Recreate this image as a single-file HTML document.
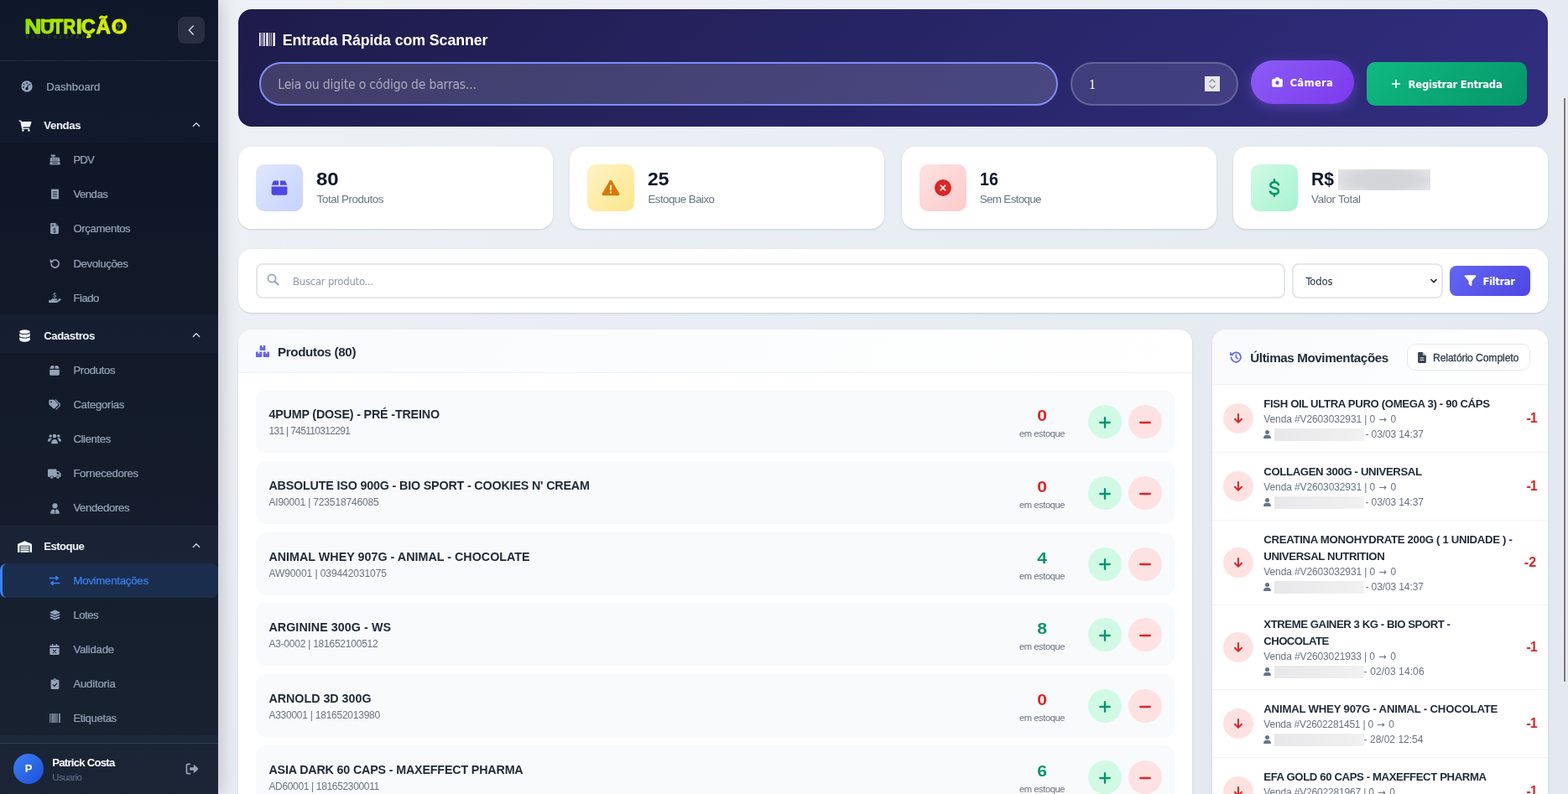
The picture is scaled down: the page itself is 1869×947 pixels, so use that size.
<!DOCTYPE html>
<html lang="pt-BR">
<head>
<meta charset="utf-8">
<title>Movimentações de Estoque</title>
<style>
*{box-sizing:border-box;margin:0;padding:0}
html,body{width:1869px;height:947px;overflow:hidden}
body{font-family:"Liberation Sans",sans-serif;color:#1e293b;background:linear-gradient(135deg,#eff3f7 0%,#e2e7f0 100%);position:relative;-webkit-font-smoothing:antialiased}
svg{display:block}
.abs{position:absolute}
.app{position:absolute;left:0;top:0;width:1869px;height:947px;overflow:hidden;will-change:transform}
/* ---------- sidebar ---------- */
.sidebar{position:absolute;left:0;top:0;width:260px;height:947px;background:linear-gradient(180deg,#0f172a 0%,#1e293b 100%);box-shadow:4px 0 20px rgba(0,0,0,.18);z-index:5;overflow:hidden}
.sb-head{position:absolute;left:0;top:0;width:260px;height:73px;border-bottom:1px solid rgba(255,255,255,.1)}
.sb-toggle{position:absolute;left:212px;top:20px;width:32px;height:32px;border-radius:8px;background:rgba(255,255,255,.1)}
.sb-toggle svg{position:absolute;left:10px;top:9px}
.nav-item{position:absolute;left:0;width:260px;height:41.12px;color:#94a3b8;font-size:13.2px;white-space:nowrap}
.nav-item .ic{position:absolute;top:0;height:41.12px;display:flex;align-items:center;justify-content:center}
.nav-item .tx{position:absolute;top:0;line-height:41.12px;-webkit-text-stroke:.22px currentColor}
.nav-group{position:absolute;left:0;width:260px;height:45px;color:#f1f5f9;font-weight:bold;font-size:13.4px}
.nav-group .tx{position:absolute;left:52px;top:0;line-height:45px}
.nav-group .ic{position:absolute;left:19.5px;top:0;width:20px;height:45px;display:flex;align-items:center;justify-content:center}
.nav-group .chev{position:absolute;left:229px;top:17.5px}
.submenu{position:absolute;left:0;width:260px;background:rgba(0,0,0,.15)}
.nav-active{position:absolute;left:0;width:260px;background:rgba(59,130,246,.15);border-left:3px solid #3b82f6;border-radius:8px}
.sb-foot{position:absolute;left:0;top:886px;width:260px;height:61px;border-top:1px solid rgba(255,255,255,.1);background:rgba(0,0,0,.08)}
.avatar{position:absolute;left:16px;top:12px;width:36px;height:36px;border-radius:50%;background:linear-gradient(135deg,#3b82f6,#1d4ed8);color:#fff;font-weight:bold;font-size:13px;line-height:36px;text-align:center}
.uname{position:absolute;left:62px;top:15px;color:#fff;font-weight:bold;font-size:13px;line-height:16px;white-space:nowrap}
.urole{position:absolute;left:62px;top:33px;color:#64748b;font-size:11px;line-height:14px}
/* ---------- scanner ---------- */
.scanner{position:absolute;left:284px;top:11px;width:1561px;height:140px;border-radius:16px;background:linear-gradient(135deg,#1e1b4b 0%,#312e81 100%)}
.scanner h2{position:absolute;left:53px;top:26px;font-size:17.5px;line-height:22px;font-weight:bold;color:#fff;white-space:nowrap}
.scan-in{position:absolute;left:25px;top:63px;width:952px;height:52px;border-radius:26px;border:2px solid #818cf8;background:rgba(255,255,255,.15);color:rgba(255,255,255,.55);font-family:"DejaVu Sans Condensed","DejaVu Sans","Liberation Sans",sans-serif;font-size:15px;line-height:50px;padding-left:20px;white-space:nowrap}
.qty-in{position:absolute;left:992px;top:63px;width:200px;height:52px;border-radius:26px;border:2px solid rgba(255,255,255,.2);background:rgba(255,255,255,.1);color:#fff;font-family:"Liberation Serif",serif;font-size:16px;line-height:50px;padding-left:20px}
.spin{position:absolute;left:158px;top:15px;width:18px;height:18px;background:#e6e6ea}
.btn-cam{position:absolute;left:1207px;top:61px;width:123px;height:52px;border-radius:26px;background:linear-gradient(135deg,#8b5cf6 0%,#7c3aed 100%);box-shadow:0 4px 15px rgba(139,92,246,.4);color:#fff;font-family:"DejaVu Sans Condensed","DejaVu Sans",sans-serif;font-weight:bold;font-size:12.5px;line-height:54px;white-space:nowrap}
.btn-reg{position:absolute;left:1345px;top:63px;width:191px;height:52px;border-radius:10px;background:linear-gradient(135deg,#10b981 0%,#059669 100%);color:#fff;font-family:"DejaVu Sans Condensed","DejaVu Sans",sans-serif;font-weight:bold;font-size:12.5px;line-height:54px;white-space:nowrap}
/* ---------- stats ---------- */
.stat{position:absolute;top:175px;width:375px;height:98px;background:#fff;border-radius:16px;box-shadow:0 1px 3px rgba(0,0,0,.1),0 1px 2px rgba(0,0,0,.06)}
.stat .sic{position:absolute;left:21px;top:21px;width:56px;height:56px;border-radius:10px;display:flex;align-items:center;justify-content:center}
.stat .num{position:absolute;left:93px;top:25px;font-size:22.5px;line-height:28px;font-weight:bold;color:#0f172a;white-space:nowrap}
.stat .lbl{position:absolute;left:93px;top:55px;font-size:13.4px;line-height:16px;color:#6b7280;white-space:nowrap}
/* ---------- filter ---------- */
.filter{position:absolute;left:284px;top:297px;width:1561px;height:76px;background:#fff;border-radius:16px;box-shadow:0 1px 3px rgba(0,0,0,.1),0 1px 2px rgba(0,0,0,.06)}
.f-in{position:absolute;left:21px;top:17px;width:1227px;height:42px;border:2px solid #e5e7eb;border-radius:8px;background:#fff;font-family:"DejaVu Sans Condensed","DejaVu Sans",sans-serif;font-size:12.4px;line-height:40px;color:#8e98a6;padding-left:42px;white-space:nowrap}
.f-sel{position:absolute;left:1256px;top:17px;width:180px;height:42px;border:2px solid #e5e7eb;border-radius:8px;background:#fff;font-family:"DejaVu Sans Condensed","DejaVu Sans",sans-serif;font-size:12.4px;line-height:40px;color:#1e293b;padding-left:14px}
.f-btn{position:absolute;left:1444px;top:20px;width:96px;height:36px;border-radius:8px;background:linear-gradient(135deg,#6366f1 0%,#4f46e5 100%);color:#fff;font-family:"DejaVu Sans Condensed","DejaVu Sans",sans-serif;font-weight:bold;font-size:12.5px;line-height:38px;white-space:nowrap}
/* ---------- cards ---------- */
.card{position:absolute;background:#fff;border-radius:16px;box-shadow:0 1px 3px rgba(0,0,0,.1),0 1px 2px rgba(0,0,0,.06);overflow:hidden}
.card-h{position:absolute;left:0;top:0;right:0;border-bottom:1px solid #f0f2f5;background:linear-gradient(135deg,#f8fafc 0%,#fff 100%)}
.card-h h3{position:absolute;font-size:15px;font-weight:bold;color:#1f2937;white-space:nowrap}
.prow{position:absolute;left:21px;width:1095px;height:75px;background:#f8fafc;border-radius:12px}
.prow .pn{position:absolute;left:15px;top:19px;font-size:14.3px;line-height:20px;font-weight:bold;color:#1f2937;white-space:nowrap}
.prow .pc{position:absolute;left:15px;top:41px;font-size:11.6px;line-height:16px;color:#6b7280;white-space:nowrap}
.prow .q{position:absolute;left:897px;top:18px;width:80px;text-align:center;font-size:18.8px;line-height:26px;font-weight:bold}
.prow .ql{position:absolute;left:897px;top:45px;width:80px;text-align:center;font-size:10.6px;line-height:14px;color:#6b7280;white-space:nowrap}
.red{color:#dc2626}.green{color:#059669}
.bplus,.bminus{position:absolute;top:18px;width:40px;height:40px;border-radius:50%}
.bplus{left:992px;background:#d1fae5}
.bminus{left:1040px;background:#fee2e2}
.mrow{position:absolute;left:0;width:400px;border-bottom:1px solid #f1f5f9}
.mrow .mi{position:absolute;left:12px;width:36px;height:36px;border-radius:50%;background:#fee2e2}
.mrow .mn{position:absolute;left:61px;font-size:13.3px;line-height:20px;font-weight:bold;color:#1f2937;white-space:nowrap}
.mrow .md{position:absolute;left:61px;font-size:11.6px;line-height:16px;color:#6b7280;white-space:nowrap}
.mrow .mq{position:absolute;white-space:nowrap;font-size:15.5px;line-height:20px;font-weight:bold;color:#dc2626}
.blur{background:linear-gradient(90deg,#e8e8ea,#f1f1f2);filter:blur(.6px)}
</style>
</head>
<body>
<div class="app">
<div class="sidebar">
<div class="sb-head">
<svg class="abs" style="left:28px;top:14px" width="130" height="36" viewBox="0 0 130 36"><defs><linearGradient id="lg" gradientUnits="userSpaceOnUse" x1="0" y1="0" x2="124" y2="0"><stop offset="0" stop-color="#8fe000"/><stop offset="1" stop-color="#e6f200"/></linearGradient></defs><text y="26.4" font-family="Liberation Sans,sans-serif" font-weight="bold" font-size="24.0" fill="url(#lg)" stroke="url(#lg)" stroke-width="1.0" stroke-linejoin="round"><tspan x="1.28" textLength="19.93" lengthAdjust="spacingAndGlyphs">N</tspan><tspan x="19.68" textLength="17.24" lengthAdjust="spacingAndGlyphs">U</tspan><tspan x="34.56" textLength="12.78" lengthAdjust="spacingAndGlyphs">T</tspan><tspan x="47.62" textLength="14.67" lengthAdjust="spacingAndGlyphs">R</tspan><tspan x="62.78" textLength="7.05" lengthAdjust="spacingAndGlyphs">I</tspan><tspan x="68.81" textLength="17.03" lengthAdjust="spacingAndGlyphs">Ç</tspan><tspan x="86.50" textLength="17.40" lengthAdjust="spacingAndGlyphs">Ã</tspan><tspan x="104.67" textLength="18.66" lengthAdjust="spacingAndGlyphs">O</tspan></text><rect x="21.5" y="9.2" width="24" height="3.4" fill="#a8e700"/><path d="M118.0 7.4 L110.2 17.2 L113.8 17.8 L107.8 28.0 L116.6 16.2 L113.0 15.6Z" fill="#506e0a"/><text x="2.8" y="32.2" font-family="Liberation Sans,sans-serif" font-weight="bold" font-size="4.6" textLength="70" lengthAdjust="spacing" fill="#2f4c0e">SUPLEMENTOS</text></svg>
<div class="sb-toggle"><svg width="12" height="14" viewBox="0 0 12 14"><path d="M8.2 2L3.400 7l4.800 5" fill="none" stroke="#cbd5e1" stroke-width="1.600" stroke-linecap="round" stroke-linejoin="round"/></svg></div>
</div>
<div class="nav-item" style="top:82.94px"><span class="ic" style="left:23px;width:18px"><svg width="14" height="14" viewBox="0 0 16 16" ><circle cx="8" cy="8" r="7.6" fill="currentColor"/><circle cx="8" cy="3.6" r="1" fill="#0f172a"/><circle cx="4.2" cy="5.2" r="1" fill="#0f172a"/><circle cx="11.8" cy="5.2" r="1" fill="#0f172a"/><circle cx="3.4" cy="9" r="1" fill="#0f172a"/><circle cx="8" cy="11" r="2" fill="#0f172a"/><path d="M7.3 11 L9.6 5.4 L10.6 5.8 L8.8 11.4Z" fill="#0f172a"/></svg></span><span class="tx" style="left:55px"><span style="font-size:13.2px;letter-spacing:-0.035px;position:relative;left:0.20px;">Dashboard</span></span></div>
<div class="nav-group" style="top:127.19999999999999px"><span class="ic"><svg width="16" height="14" viewBox="0 0 18 16" ><path d="M0.5 0.6h2.4c.5 0 .9.3 1 .8l.2.9h12.6c.6 0 1 .6.8 1.100l-1.600 5.200c-.2.600-.7 1-1.300 1H6l.3 1.400h8.500v1.500H5.400c-.4 0-.8-.3-.9-.7L2.400 2.100H.5z" fill="currentColor"/><circle cx="6" cy="14.300" r="1.500" fill="currentColor"/><circle cx="14" cy="14.300" r="1.500" fill="currentColor"/></svg></span><span class="tx"><span style="font-size:13.2px;letter-spacing:-0.349px;position:relative;left:0.20px;">Vendas</span></span><span class="chev"><svg width="10" height="7" viewBox="0 0 10 7" ><path d="M1.300 5.500L5 1.800l3.700 3.700" fill="none" stroke="#cbd5e1" stroke-width="1.400" stroke-linecap="round" stroke-linejoin="round"/></svg></span></div>
<div class="submenu" style="top:169.8px;height:205.60px"></div>
<div class="nav-item" style="top:170.15px;color:#94a3b8"><span class="ic" style="left:56px;width:18px"><svg width="13" height="13" viewBox="0 0 16 16" ><rect x="2" y="0.5" width="6.500" height="2.500" rx=".6" fill="currentColor"/><rect x="4.300" y="3" width="2" height="1.500" fill="currentColor"/><path d="M2.600 4.500h10.800c.5 0 .9.300 1 .8l1.100 5.200H.5l1.100-5.200c.1-.5.500-.8 1-.8z" fill="currentColor"/><rect x="0.5" y="11.300" width="15" height="4.200" rx="1" fill="currentColor"/><g fill="#0f172a"><rect x="3.500" y="6" width="1.300" height="1.100"/><rect x="6" y="6" width="1.300" height="1.100"/><rect x="8.600" y="6" width="1.300" height="1.100"/><rect x="11.200" y="6" width="1.300" height="1.100"/><rect x="4.500" y="8.200" width="1.300" height="1.100"/><rect x="7.300" y="8.200" width="1.300" height="1.100"/><rect x="10.100" y="8.200" width="1.300" height="1.100"/><rect x="4" y="12.900" width="8" height="1"/></g></svg></span><span class="tx" style="left:87px"><span style="font-size:13.2px;letter-spacing:-0.900px;position:relative;left:0.40px;">PDV</span></span></div>
<div class="nav-item" style="top:211.27px;color:#94a3b8"><span class="ic" style="left:56px;width:18px"><svg width="11" height="13" viewBox="0 0 12 16" ><path d="M0.5 0.300l1.400 1 1.300-1 1.400 1 1.400-1 1.400 1 1.400-1 1.300 1 1.400-1v15.400l-1.400-1-1.300 1-1.400-1-1.400 1-1.400-1-1.400 1-1.300-1-1.400 1z" fill="currentColor"/><g fill="#0f172a"><rect x="2.800" y="4.300" width="6.400" height="1.100"/><rect x="2.800" y="7.400" width="6.400" height="1.100"/><rect x="2.800" y="10.500" width="6.400" height="1.100"/></g></svg></span><span class="tx" style="left:87px"><span style="font-size:13.2px;letter-spacing:-0.521px;position:relative;left:0.40px;">Vendas</span></span></div>
<div class="nav-item" style="top:252.39px;color:#94a3b8"><span class="ic" style="left:56px;width:18px"><svg width="10" height="13" viewBox="0 0 12 16" ><path d="M1.500 0h6l4.500 4.500V14.500c0 .8-.7 1.500-1.500 1.500h-9C.7 16 0 15.300 0 14.500v-13C0 .7.700 0 1.500 0z" fill="currentColor"/><path d="M7.500 0v3.500c0 .6.400 1 1 1H12z" fill="#0f172a" opacity=".45"/><g fill="#0f172a"><rect x="2" y="2" width="3" height="1"/><rect x="2" y="4" width="3" height="1"/></g><path d="M7.600 9.300C7.300 8.600 6.700 8.300 6 8.300c-1 0-1.700.5-1.700 1.300 0 1.800 3.400.7 3.400 2.600 0 .8-.7 1.300-1.700 1.300-.8 0-1.400-.3-1.700-1M6 7.300v1M6 13.500v1" fill="none" stroke="#0f172a" stroke-width="1" stroke-linecap="round"/></svg></span><span class="tx" style="left:87px"><span style="font-size:13.2px;letter-spacing:-0.392px;position:relative;left:0.40px;">Orçamentos</span></span></div>
<div class="nav-item" style="top:293.51px;color:#94a3b8"><span class="ic" style="left:56px;width:18px"><svg width="13" height="13" viewBox="0 0 16 16" ><path d="M2.600 8a5.600 5.600 0 1 0 1.900-4.200" fill="none" stroke="currentColor" stroke-width="2" stroke-linecap="round"/><path d="M0.800 1.200v5.300h5.300z" fill="currentColor"/></svg></span><span class="tx" style="left:87px"><span style="font-size:13.2px;letter-spacing:-0.379px;position:relative;left:0.40px;">Devoluções</span></span></div>
<div class="nav-item" style="top:334.63px;color:#94a3b8"><span class="ic" style="left:56px;width:18px"><svg width="15" height="13" viewBox="0 0 18 16" ><path d="M10.200 2.300C9.900 1.600 9.300 1.300 8.500 1.300c-1.100 0-1.800.5-1.800 1.300 0 1.800 3.600.7 3.600 2.600 0 .8-.7 1.300-1.800 1.300-.9 0-1.500-.3-1.800-1M8.500 .2v1.100M8.500 6.500v1.100" fill="none" stroke="currentColor" stroke-width="1.100" stroke-linecap="round"/><path d="M0 11h2.500l2.200-1.700c.4-.3.900-.5 1.400-.5h5.200c.6 0 1.100.5 1.100 1.100s-.5 1.100-1.100 1.100H8.500v.6h3.700l3.600-2.600c.5-.4 1.300-.3 1.700.3.400.5.300 1.300-.3 1.700l-4.300 3.100c-.5.400-1.100.6-1.700.6H0z" fill="currentColor"/></svg></span><span class="tx" style="left:87px"><span style="font-size:13.2px;letter-spacing:-0.488px;position:relative;left:0.40px;">Fiado</span></span></div>
<div class="nav-group" style="top:378.3px"><span class="ic"><svg width="13" height="15" viewBox="0 0 14 16" ><ellipse cx="7" cy="2.800" rx="6.800" ry="2.700" fill="currentColor"/><path d="M0.200 4.700c1.300 1.100 4 1.700 6.800 1.700s5.500-.6 6.800-1.700v3c0 1.400-3 2.600-6.800 2.600S.2 9.100.2 7.700z" fill="currentColor"/><path d="M0.200 9.600c1.300 1.100 4 1.700 6.800 1.700s5.500-.6 6.800-1.700v3.300C13.800 14.500 10.800 15.800 7 15.800S.2 14.500.2 12.900z" fill="currentColor"/></svg></span><span class="tx"><span style="font-size:13.2px;letter-spacing:-0.420px;position:relative;left:0.20px;">Cadastros</span></span><span class="chev"><svg width="10" height="7" viewBox="0 0 10 7" ><path d="M1.300 5.500L5 1.800l3.700 3.700" fill="none" stroke="#cbd5e1" stroke-width="1.400" stroke-linecap="round" stroke-linejoin="round"/></svg></span></div>
<div class="submenu" style="top:421.0px;height:205.60px"></div>
<div class="nav-item" style="top:421.0px;color:#94a3b8"><span class="ic" style="left:56px;width:18px"><svg width="12" height="12" viewBox="0 0 14 14" ><path d="M1.700 1.100c.2-.5.700-.8 1.200-.8H6.300v4.200H.3z" fill="currentColor"/><path d="M7.700.3h3.400c.5 0 1 .3 1.200.8l1.400 3.400H7.700z" fill="currentColor"/><path d="M0.200 5.900h13.600v6c0 1-.8 1.800-1.800 1.800H2c-1 0-1.800-.8-1.800-1.800z" fill="currentColor"/></svg></span><span class="tx" style="left:87px"><span style="font-size:13.2px;letter-spacing:-0.355px;position:relative;left:0.40px;">Produtos</span></span></div>
<div class="nav-item" style="top:462.12px;color:#94a3b8"><span class="ic" style="left:56px;width:18px"><svg width="14" height="13" viewBox="0 0 18 16" ><path d="M0.500 1.800C.5 1.100 1.100.5 1.800.5h5.400c.5 0 .9.200 1.200.5l5.700 5.700c.7.700.7 1.800 0 2.500l-4.700 4.700c-.7.700-1.800.7-2.500 0L1 8.200C.7 7.900.5 7.400.5 7z" fill="currentColor"/><circle cx="4" cy="4" r="1.200" fill="#0f172a"/><path d="M10.500.8l5.900 5.900c1 1 1 2.600 0 3.600l-4.900 4.900" fill="none" stroke="currentColor" stroke-width="1.500" stroke-linecap="round"/></svg></span><span class="tx" style="left:87px"><span style="font-size:13.2px;letter-spacing:-0.309px;position:relative;left:0.40px;">Categorias</span></span></div>
<div class="nav-item" style="top:503.24px;color:#94a3b8"><span class="ic" style="left:56px;width:18px"><svg width="16" height="13" viewBox="0 0 20 16" ><circle cx="10" cy="3.700" r="2.900" fill="currentColor"/><circle cx="4" cy="3.600" r="2.200" fill="currentColor"/><circle cx="16" cy="3.600" r="2.200" fill="currentColor"/><path d="M5.200 14.300c0-3 2-5.600 4.800-5.600s4.800 2.600 4.800 5.600c0 .5-.4.900-.9.900H6.100c-.5 0-.9-.4-.9-.9z" fill="currentColor"/><path d="M0 11.200c0-2.400 1.500-4.300 3.700-4.300.8 0 1.500.2 2.100.6-1.300 1-2.100 2.400-2.300 4.100H.4c-.2 0-.4-.2-.4-.4z" fill="currentColor"/><path d="M20 11.200c0-2.400-1.500-4.300-3.700-4.300-.8 0-1.500.2-2.100.6 1.300 1 2.100 2.400 2.300 4.100h3.100c.2 0 .4-.2.400-.4z" fill="currentColor"/></svg></span><span class="tx" style="left:87px"><span style="font-size:13.2px;letter-spacing:-0.379px;position:relative;left:0.40px;">Clientes</span></span></div>
<div class="nav-item" style="top:544.36px;color:#94a3b8"><span class="ic" style="left:56px;width:18px"><svg width="16" height="14" viewBox="0 0 20 16" ><path d="M1.500 1h10c.8 0 1.500.7 1.500 1.500V4h2.400c.5 0 1 .2 1.300.6l2.400 2.700c.3.300.4.700.4 1.200V12c0 .6-.4 1-1 1h-.6a3 3 0 0 0-5.800 0H8.900a3 3 0 0 0-5.800 0H1.500C.7 13 0 12.300 0 11.500v-9C0 1.700.7 1 1.500 1z" fill="currentColor"/><path d="M13.500 5.500v3h4.300l-2.300-2.700c-.1-.2-.3-.3-.5-.3z" fill="#0f172a"/><circle cx="6" cy="13.300" r="2" fill="currentColor"/><circle cx="15" cy="13.300" r="2" fill="currentColor"/></svg></span><span class="tx" style="left:87px"><span style="font-size:13.2px;letter-spacing:-0.334px;position:relative;left:0.40px;">Fornecedores</span></span></div>
<div class="nav-item" style="top:585.48px;color:#94a3b8"><span class="ic" style="left:56px;width:18px"><svg width="11" height="13" viewBox="0 0 14 16" ><circle cx="7" cy="4" r="3.900" fill="currentColor"/><path d="M0.200 15c0-3.200 2-5.800 4.700-6.200L7 11.500 9.100 8.800c2.700.4 4.700 3 4.700 6.200 0 .5-.4.900-.9.900H1.100c-.5 0-.9-.4-.9-.9z" fill="currentColor"/><path d="M6.300 9.500h1.400l.3 1-.500 1 .8 3.300L7 15.800l-1.300-1 .8-3.300-.5-1z" fill="#0f172a" opacity=".55"/></svg></span><span class="tx" style="left:87px"><span style="font-size:13.2px;letter-spacing:-0.344px;position:relative;left:0.40px;">Vendedores</span></span></div>
<div class="nav-group" style="top:629.2px"><span class="ic"><svg width="17" height="14" viewBox="0 0 20 16" ><path d="M0 15.500V5.200c0-.6.400-1.200.9-1.400L9.300.3c.4-.2.900-.2 1.400 0l8.400 3.500c.5.200.9.800.9 1.400v10.300c0 .3-.2.500-.5.500h-1.900c-.3 0-.5-.2-.5-.5V7.300c0-.5-.4-.9-.9-.9H3.800c-.5 0-.9.400-.9.900v8.200c0 .3-.2.500-.5.500H.5c-.3 0-.5-.2-.5-.5z" fill="currentColor"/><rect x="4" y="7.600" width="12" height="2" fill="currentColor"/><rect x="4" y="10.500" width="12" height="2" fill="currentColor"/><rect x="4" y="13.400" width="12" height="2.600" fill="currentColor"/></svg></span><span class="tx"><span style="font-size:13.2px;letter-spacing:-0.581px;position:relative;left:0.20px;">Estoque</span></span><span class="chev"><svg width="10" height="7" viewBox="0 0 10 7" ><path d="M1.300 5.500L5 1.800l3.700 3.700" fill="none" stroke="#cbd5e1" stroke-width="1.400" stroke-linecap="round" stroke-linejoin="round"/></svg></span></div>
<div class="submenu" style="top:671.8px;height:205.60px"></div>
<div class="nav-active" style="top:671.8px;height:41.12px"></div>
<div class="nav-item" style="top:671.8px;color:#3b82f6"><span class="ic" style="left:56px;width:18px"><svg width="14" height="13" viewBox="0 0 16 16" ><path d="M1 4.300h11" stroke="currentColor" stroke-width="1.800" fill="none" stroke-linecap="round"/><path d="M10.200 1.200l3.800 3.100-3.800 3.100z" fill="currentColor" stroke="currentColor" stroke-width="1" stroke-linejoin="round"/><path d="M15 11.700H4" stroke="currentColor" stroke-width="1.800" fill="none" stroke-linecap="round"/><path d="M5.800 8.600L2 11.700l3.800 3.100z" fill="currentColor" stroke="currentColor" stroke-width="1" stroke-linejoin="round"/></svg></span><span class="tx" style="left:87px"><span style="font-size:13.2px;letter-spacing:-0.230px;position:relative;left:0.40px;">Movimentações</span></span></div>
<div class="nav-item" style="top:712.92px;color:#94a3b8"><span class="ic" style="left:56px;width:18px"><svg width="13" height="13" viewBox="0 0 16 16" ><path d="M8 .5l7.200 3.200c.4.200.4.800 0 1L8 7.900.8 4.700c-.4-.2-.4-.8 0-1z" fill="currentColor"/><path d="M.8 7.400l1.700-.7L8 9.200l5.500-2.500 1.700.7c.4.200.4.800 0 1L8 11.600.8 8.400c-.4-.2-.4-.8 0-1z" fill="currentColor"/><path d="M.8 11.200l1.700-.7L8 13l5.500-2.500 1.700.7c.4.200.4.800 0 1L8 15.400.8 12.200c-.4-.2-.4-.8 0-1z" fill="currentColor"/></svg></span><span class="tx" style="left:87px"><span style="font-size:13.2px;letter-spacing:-0.492px;position:relative;left:0.40px;">Lotes</span></span></div>
<div class="nav-item" style="top:754.04px;color:#94a3b8"><span class="ic" style="left:56px;width:18px"><svg width="12" height="13" viewBox="0 0 14 16" ><rect x="3" y="0" width="2" height="3.500" rx="1" fill="currentColor"/><rect x="9" y="0" width="2" height="3.500" rx="1" fill="currentColor"/><path d="M0 3.500C0 2.700.7 2 1.500 2h11c.8 0 1.500.7 1.500 1.500V5H0z" fill="currentColor"/><path d="M0 6h14v8.500c0 .8-.7 1.500-1.500 1.500h-11C.7 16 0 15.300 0 14.500z" fill="currentColor"/><path d="M5 9l4 4M9 9l-4 4" stroke="#0f172a" stroke-width="1.400" stroke-linecap="round"/></svg></span><span class="tx" style="left:87px"><span style="font-size:13.2px;letter-spacing:-0.230px;position:relative;left:0.40px;">Validade</span></span></div>
<div class="nav-item" style="top:795.16px;color:#94a3b8"><span class="ic" style="left:56px;width:18px"><svg width="11" height="13" viewBox="0 0 12 16" ><path d="M1.500 2h2.100a2.500 2.500 0 0 1 4.800 0h2.100c.8 0 1.500.7 1.500 1.500v11c0 .8-.7 1.500-1.500 1.500h-9C.7 16 0 15.300 0 14.500v-11C0 2.700.7 2 1.500 2z" fill="currentColor"/><circle cx="6" cy="2.600" r=".9" fill="#0f172a"/><path d="M3.300 9.600l1.900 1.900 3.600-3.900" fill="none" stroke="#0f172a" stroke-width="1.400" stroke-linecap="round" stroke-linejoin="round"/></svg></span><span class="tx" style="left:87px"><span style="font-size:13.2px;letter-spacing:-0.214px;position:relative;left:0.40px;">Auditoria</span></span></div>
<div class="nav-item" style="top:836.28px;color:#94a3b8"><span class="ic" style="left:56px;width:18px"><svg width="13" height="11" viewBox="0 0 16 14" ><g fill="currentColor"><rect x="0" y="0" width="1.300" height="14"/><rect x="2.200" y="0" width=".8" height="14"/><rect x="4" y="0" width="2" height="14"/><rect x="7" y="0" width="2" height="14"/><rect x="10" y="0" width=".8" height="14"/><rect x="11.700" y="0" width=".8" height="14"/><rect x="14" y="0" width="2" height="14"/></g></svg></span><span class="tx" style="left:87px"><span style="font-size:13.2px;letter-spacing:-0.399px;position:relative;left:0.40px;">Etiquetas</span></span></div>
<div class="sb-foot"><div class="avatar">P</div><div class="uname"><span style="font-size:13.2px;letter-spacing:-0.780px;position:relative;left:0.30px;">Patrick Costa</span></div><div class="urole"><span style="font-size:11.4px;letter-spacing:-0.602px;position:relative;left:0.30px;">Usuario</span></div><span class="abs" style="left:221px;top:23px;color:#94a3b8"><svg width="16" height="14" viewBox="0 0 18 16" ><path d="M6 1.500H3.500C2.400 1.500 1.500 2.400 1.500 3.500v9c0 1.100.9 2 2 2H6" fill="none" stroke="currentColor" stroke-width="2" stroke-linecap="round"/><path d="M6.500 6h4.500V3.200c0-.6.700-.9 1.100-.5l5.100 4.800c.3.300.3.700 0 1l-5.100 4.800c-.4.400-1.100.1-1.100-.5V10H6.500c-.5 0-.8-.4-.8-.8V6.800c0-.4.400-.8.800-.8z" fill="currentColor"/></svg></span></div>
</div>
<div class="scanner">
<svg class="abs" style="left:25px;top:28px" width="19" height="16" viewBox="0 0 19 16"><g fill="#fff"><rect x="0" y="0" width="1.5" height="16"/><rect x="2.5" y="0" width="1" height="16" opacity=".75"/><rect x="4.6" y="0" width="2.3" height="16" opacity=".8"/><rect x="8.3" y="0" width="2.3" height="16"/><rect x="11.8" y="0" width="1" height="16" opacity=".75"/><rect x="13.8" y="0" width="1" height="16" opacity=".75"/><rect x="16.5" y="0" width="2.3" height="16"/></g></svg><h2><span style="font-size:17.8px;letter-spacing:-0.097px;position:relative;left:-0.20px;">Entrada Rápida com Scanner</span></h2>
<div class="scan-in"><span style="font-size:15.6px;letter-spacing:-0.191px;position:relative;left:0.30px;">Leia ou digite o código de barras...</span></div>
<div class="qty-in">1<div class="spin"><svg width="18" height="18" viewBox="0 0 18 18"><path d="M5.5 7.2L9 3.8l3.5 3.400M5.5 10.800L9 14.200l3.500-3.400" fill="none" stroke="#8a8a92" stroke-width="1.300"/></svg></div></div>
<div class="btn-cam"><svg class="abs" style="left:25px;top:20px" width="13" height="12" viewBox="0 0 14 12" preserveAspectRatio="none"><path d="M4.300 1.200C4.500.6 5 .2 5.600.2h2.800c.6 0 1.100.4 1.300 1l.3.800h2c1 0 1.800.8 1.800 1.800v6.200c0 1-.8 1.800-1.800 1.800H2c-1 0-1.800-.8-1.800-1.800V3.800C.2 2.800 1 2 2 2h2z" fill="#fff"/><circle cx="7" cy="6.700" r="2.400" fill="#8450f0"/></svg><span class="abs" style="left:46px;top:0"><span style="font-size:13px;letter-spacing:0.247px;position:relative;left:0.50px;">Câmera</span></span></div>
<div class="btn-reg"><svg class="abs" style="left:29px;top:20px" width="12" height="12" viewBox="0 0 12 12"><path d="M6 1v10M1 6h10" stroke="#fff" stroke-width="1.600" fill="none"/></svg><span class="abs" style="left:49px;top:0"><span style="font-size:13px;letter-spacing:-0.314px;position:relative;left:0.60px;">Registrar Entrada</span></span></div>
</div>
<div class="stat" style="left:284px"><div class="sic" style="background:linear-gradient(135deg,#e0e7ff,#c7d2fe)"><svg width="20" height="18" viewBox="0 0 14 13"><path d="M1.700 1.100c.2-.5.700-.8 1.200-.8H6.300v3.900H.3z" fill="#4f46e5"/><path d="M7.700.3h3.400c.5 0 1 .3 1.200.8l1.400 3.100H7.700z" fill="#4f46e5"/><path d="M0.200 5.500h13.600v5.500c0 1-.8 1.800-1.800 1.800H2c-1 0-1.800-.8-1.800-1.800z" fill="#4f46e5"/></svg></div><div class="num"><span style="font-size:21.8px;display:inline-block;transform:scaleX(1.103);transform-origin:0 50%">80</span></div><div class="lbl"><span style="font-size:13.4px;letter-spacing:-0.446px;position:relative;left:0.70px;">Total Produtos</span></div></div>
<div class="stat" style="left:679px"><div class="sic" style="background:linear-gradient(135deg,#fef3c7,#fde68a)"><svg width="22" height="20" viewBox="0 0 22 20"><path d="M11 .8c.6 0 1.200.3 1.500.9l8.700 15c.6 1.100-.1 2.500-1.500 2.500H2.300c-1.300 0-2.100-1.400-1.500-2.500l8.700-15c.3-.6.900-.9 1.500-.9z" fill="#d97706"/><rect x="10" y="6.500" width="2" height="6.500" rx="1" fill="#fef0c0"/><circle cx="11" cy="15.500" r="1.200" fill="#fef0c0"/></svg></div><div class="num"><span style="font-size:21.8px;display:inline-block;transform:scaleX(1.049);transform-origin:0 50%">25</span></div><div class="lbl"><span style="font-size:13.4px;letter-spacing:-0.559px;position:relative;left:0.40px;">Estoque Baixo</span></div></div>
<div class="stat" style="left:1075px"><div class="sic" style="background:linear-gradient(135deg,#fee2e2,#fecaca)"><svg width="20" height="20" viewBox="0 0 20 20"><circle cx="10" cy="10" r="10" fill="#dc2626"/><path d="M7.200 7.200l5.600 5.600M12.800 7.200l-5.600 5.600" stroke="#fee2e2" stroke-width="1.800" stroke-linecap="round"/></svg></div><div class="num"><span style="font-size:21.8px;display:inline-block;transform:scaleX(0.900);transform-origin:0 50%">16</span></div><div class="lbl"><span style="font-size:13.4px;letter-spacing:-0.674px;position:relative;left:-0.20px;">Sem Estoque</span></div></div>
<div class="stat" style="left:1470px"><div class="sic" style="background:linear-gradient(135deg,#d1fae5,#a7f3d0)"><svg width="14" height="22" viewBox="0 0 14 22"><path d="M7 1.300v2.800M7 17.900v2.800M12 7.300C11.300 5.300 9.500 4.200 7.100 4.200 4.300 4.200 2.300 5.600 2.300 7.700c0 2.300 2 3 4.700 3.500s4.800 1.300 4.800 3.700c0 2.100-2 3.500-4.700 3.500-2.500 0-4.400-1-5.100-2.900" fill="none" stroke="#059669" stroke-width="2.500" stroke-linecap="round"/></svg></div><div class="num"><span style="font-size:21.8px;display:inline-block;transform:scaleX(0.970);transform-origin:0 50%">R$</span><span class="abs" style="left:32px;top:2px;width:110px;height:25px;background:radial-gradient(ellipse 60% 75% at 50% 50%,#d3d4d8 0%,#d5d6da 55%,#e4e4e7 100%)"></span></div><div class="lbl"><span style="font-size:13.4px;letter-spacing:-0.299px;position:relative;left:0.00px;">Valor Total</span></div></div>
<div class="filter">
<div class="f-in"><svg class="abs" style="left:11px;top:10px" width="15" height="15" viewBox="0 0 15 15"><circle cx="6" cy="6" r="4.600" fill="none" stroke="#94a3b8" stroke-width="1.700"/><path d="M9.500 9.500l4 4" stroke="#94a3b8" stroke-width="1.800" stroke-linecap="round"/></svg><span style="font-size:13px;letter-spacing:-0.251px;position:relative;left:0.00px;">Buscar produto...</span></div>
<div class="f-sel"><span style="font-size:13px;letter-spacing:-0.142px;position:relative;left:0.50px;">Todos</span><svg class="abs" style="left:162px;top:15px" width="10" height="8" viewBox="0 0 10 8"><path d="M1.500 2l3.500 3.500L8.500 2" fill="none" stroke="#222" stroke-width="1.600"/></svg></div>
<div class="f-btn"><svg class="abs" style="left:17px;top:11px" width="15" height="14" viewBox="0 0 15 14"><path d="M0.600 1.200C.6.700 1 .3 1.500.3h12c.8 0 1.200.9.700 1.500L9.400 7.300v4.900c0 .7-.8 1.100-1.300.7L6 11.300c-.3-.2-.4-.5-.4-.8V7.300L.9 1.800C.7 1.600.6 1.400.6 1.200z" fill="#fff"/></svg><span class="abs" style="left:39px;top:0"><span style="font-size:13px;letter-spacing:-0.392px;position:relative;left:0.40px;">Filtrar</span></span></div>
</div>
<div class="card" style="left:284px;top:393px;width:1137px;height:600px">
<div class="card-h" style="height:52px"><svg class="abs" style="left:21px;top:19px" width="16" height="14" viewBox="0 0 16 14"><g fill="#6366f1"><path d="M5.300 0h1.900v2.200h1.600V0h1.900c.4 0 .7.300.7.700v4.600c0 .4-.3.700-.7.700H5.300c-.4 0-.7-.3-.7-.7V.7c0-.4.300-.7.700-.7z"/><path d="M.7 7.500h1.900v2.200h1.600V7.500h2.400c.4 0 .7.300.7.700v5.100c0 .4-.3.700-.7.700H.7c-.4 0-.7-.3-.7-.7V8.200c0-.4.300-.7.700-.7z"/><path d="M9.400 7.500h2.400v2.200h1.600V7.500h1.900c.4 0 .7.300.7.700v5.100c0 .4-.3.700-.7.700H9.400c-.4 0-.7-.3-.7-.7V8.200c0-.4.300-.7.700-.7z"/></g></svg><h3 style="left:47px;top:17px;line-height:20px"><span style="font-size:15.2px;letter-spacing:-0.369px;position:relative;left:0.00px;">Produtos (80)</span></h3></div>
<div class="prow" style="top:72.0px"><div class="pn"><span style="font-size:14.3px;letter-spacing:-0.168px;position:relative;left:0.40px;">4PUMP (DOSE) - PRÉ -TREINO</span></div><div class="pc"><span style="font-size:12px;letter-spacing:-0.672px;position:relative;left:0.40px;">131 | 745110312291</span></div><div class="q red"><span style="display:inline-block;transform:scaleX(1.13)">0</span></div><div class="ql"><span style="font-size:11.2px;letter-spacing:-0.460px;">em estoque</span></div><div class="bplus"><svg class="abs" style="left:13px;top:13.8px" width="14" height="14" viewBox="0 0 14 14"><path d="M7 1.2v11.600M1.200 7h11.600" stroke="#059669" stroke-width="2.300" stroke-linecap="round" fill="none"/></svg></div><div class="bminus"><svg class="abs" style="left:13px;top:13.8px" width="14" height="14" viewBox="0 0 14 14"><path d="M1.200 7h11.600" stroke="#dc2626" stroke-width="2.300" stroke-linecap="round" fill="none"/></svg></div></div>
<div class="prow" style="top:156.8px"><div class="pn"><span style="font-size:14.3px;letter-spacing:-0.165px;position:relative;left:0.40px;">ABSOLUTE ISO 900G - BIO SPORT - COOKIES N' CREAM</span></div><div class="pc"><span style="font-size:12px;letter-spacing:-0.157px;position:relative;left:0.40px;">AI90001 | 723518746085</span></div><div class="q red"><span style="display:inline-block;transform:scaleX(1.13)">0</span></div><div class="ql"><span style="font-size:11.2px;letter-spacing:-0.460px;">em estoque</span></div><div class="bplus"><svg class="abs" style="left:13px;top:13.8px" width="14" height="14" viewBox="0 0 14 14"><path d="M7 1.2v11.600M1.200 7h11.600" stroke="#059669" stroke-width="2.300" stroke-linecap="round" fill="none"/></svg></div><div class="bminus"><svg class="abs" style="left:13px;top:13.8px" width="14" height="14" viewBox="0 0 14 14"><path d="M1.200 7h11.600" stroke="#dc2626" stroke-width="2.300" stroke-linecap="round" fill="none"/></svg></div></div>
<div class="prow" style="top:241.6px"><div class="pn"><span style="font-size:14.3px;letter-spacing:0.018px;position:relative;left:0.40px;">ANIMAL WHEY 907G - ANIMAL - CHOCOLATE</span></div><div class="pc"><span style="font-size:12px;letter-spacing:-0.074px;position:relative;left:0.40px;">AW90001 | 039442031075</span></div><div class="q green"><span style="display:inline-block;transform:scaleX(1.13)">4</span></div><div class="ql"><span style="font-size:11.2px;letter-spacing:-0.460px;">em estoque</span></div><div class="bplus"><svg class="abs" style="left:13px;top:13.8px" width="14" height="14" viewBox="0 0 14 14"><path d="M7 1.2v11.600M1.200 7h11.600" stroke="#059669" stroke-width="2.300" stroke-linecap="round" fill="none"/></svg></div><div class="bminus"><svg class="abs" style="left:13px;top:13.8px" width="14" height="14" viewBox="0 0 14 14"><path d="M1.200 7h11.600" stroke="#dc2626" stroke-width="2.300" stroke-linecap="round" fill="none"/></svg></div></div>
<div class="prow" style="top:326.4px"><div class="pn"><span style="font-size:14.3px;letter-spacing:0.062px;position:relative;left:0.40px;">ARGININE 300G - WS</span></div><div class="pc"><span style="font-size:12px;letter-spacing:-0.236px;position:relative;left:0.40px;">A3-0002 | 181652100512</span></div><div class="q green"><span style="display:inline-block;transform:scaleX(1.13)">8</span></div><div class="ql"><span style="font-size:11.2px;letter-spacing:-0.460px;">em estoque</span></div><div class="bplus"><svg class="abs" style="left:13px;top:13.8px" width="14" height="14" viewBox="0 0 14 14"><path d="M7 1.2v11.600M1.200 7h11.600" stroke="#059669" stroke-width="2.300" stroke-linecap="round" fill="none"/></svg></div><div class="bminus"><svg class="abs" style="left:13px;top:13.8px" width="14" height="14" viewBox="0 0 14 14"><path d="M1.200 7h11.600" stroke="#dc2626" stroke-width="2.300" stroke-linecap="round" fill="none"/></svg></div></div>
<div class="prow" style="top:411.2px"><div class="pn"><span style="font-size:14.3px;letter-spacing:-0.017px;position:relative;left:0.40px;">ARNOLD 3D 300G</span></div><div class="pc"><span style="font-size:12px;letter-spacing:-0.245px;position:relative;left:0.40px;">A330001 | 181652013980</span></div><div class="q red"><span style="display:inline-block;transform:scaleX(1.13)">0</span></div><div class="ql"><span style="font-size:11.2px;letter-spacing:-0.460px;">em estoque</span></div><div class="bplus"><svg class="abs" style="left:13px;top:13.8px" width="14" height="14" viewBox="0 0 14 14"><path d="M7 1.2v11.600M1.200 7h11.600" stroke="#059669" stroke-width="2.300" stroke-linecap="round" fill="none"/></svg></div><div class="bminus"><svg class="abs" style="left:13px;top:13.8px" width="14" height="14" viewBox="0 0 14 14"><path d="M1.200 7h11.600" stroke="#dc2626" stroke-width="2.300" stroke-linecap="round" fill="none"/></svg></div></div>
<div class="prow" style="top:496.0px"><div class="pn"><span style="font-size:14.3px;letter-spacing:-0.170px;position:relative;left:0.40px;">ASIA DARK 60 CAPS - MAXEFFECT PHARMA</span></div><div class="pc"><span style="font-size:12px;letter-spacing:-0.340px;position:relative;left:0.40px;">AD60001 | 181652300011</span></div><div class="q green"><span style="display:inline-block;transform:scaleX(1.13)">6</span></div><div class="ql"><span style="font-size:11.2px;letter-spacing:-0.460px;">em estoque</span></div><div class="bplus"><svg class="abs" style="left:13px;top:13.8px" width="14" height="14" viewBox="0 0 14 14"><path d="M7 1.2v11.600M1.200 7h11.600" stroke="#059669" stroke-width="2.300" stroke-linecap="round" fill="none"/></svg></div><div class="bminus"><svg class="abs" style="left:13px;top:13.8px" width="14" height="14" viewBox="0 0 14 14"><path d="M1.200 7h11.600" stroke="#dc2626" stroke-width="2.300" stroke-linecap="round" fill="none"/></svg></div></div>
</div>
<div class="card" style="left:1445px;top:393px;width:400px;height:600px">
<div class="card-h" style="height:66px"><svg class="abs" style="left:20px;top:25px" width="16" height="16" viewBox="0 0 16 16"><path d="M2.600 8.200a5.700 5.700 0 1 0 1.800-4.300" fill="none" stroke="#6366f1" stroke-width="1.700" stroke-linecap="round"/><path d="M1 1.500v4.600h4.600z" fill="#6366f1"/><path d="M8.300 5v3.300l2.200 1.500" fill="none" stroke="#6366f1" stroke-width="1.500" stroke-linecap="round"/></svg><h3 style="left:45px;top:24px;line-height:20px"><span style="font-size:15.2px;letter-spacing:-0.404px;position:relative;left:0.30px;">Últimas Movimentações</span></h3><div class="abs" style="left:232px;top:17px;width:147px;height:32px;border:1px solid #e5e7eb;border-radius:10px;background:#fff"><svg class="abs" style="left:12px;top:9px" width="10" height="13" viewBox="0 0 12 16"><path d="M1.500 0h5.500l5 5v9.500c0 .8-.7 1.500-1.500 1.500h-9C.7 16 0 15.300 0 14.500v-13C0 .7.700 0 1.500 0z" fill="#374151"/><path d="M7 0v3.800c0 .7.500 1.200 1.200 1.200H12z" fill="#fff" opacity=".6"/><rect x="3" y="8" width="6" height="1.200" fill="#fff"/><rect x="3" y="11" width="6" height="1.200" fill="#fff"/></svg><span class="abs" style="left:29px;top:0;line-height:29px;color:#374151;white-space:nowrap"><span style="font-size:12.2px;letter-spacing:-0.114px;position:relative;left:1.00px;-webkit-text-stroke:0.35px #374151;">Relatório Completo</span></span></div></div>
<div class="mrow" style="top:66px;height:81px"><div class="mi" style="top:22px;left:13px"><svg class="abs" style="left:12px;top:11px" width="12" height="14" viewBox="0 0 12 14"><path d="M6 2v9.500M2 7.800l4 4L10 7.800" fill="none" stroke="#dc2626" stroke-width="2" stroke-linecap="round" stroke-linejoin="round"/></svg></div><div class="mn" style="top:13px"><span style="font-size:13.2px;letter-spacing:-0.365px;position:relative;left:0.30px;">FISH OIL ULTRA PURO (OMEGA 3) - 90 CÁPS</span></div><div class="md" style="top:33px"><span style="font-size:12px;letter-spacing:-0.113px;position:relative;left:0.30px;">Venda #V2603032931 | 0 <span style="font-family:DejaVu Sans,sans-serif;font-size:0.95em;letter-spacing:0;display:inline-block;width:1.053em;text-align:center;position:relative;top:-0.5px">→</span> 0</span></div><div class="md" style="top:51px;width:250px"><svg class="abs" style="left:0;top:3px" width="9" height="10" viewBox="0 0 9 10"><circle cx="4.500" cy="2.600" r="2.500" fill="#64748b"/><path d="M0 9.300c0-2 1.600-3.600 3.600-3.600h1.800c2 0 3.600 1.600 3.600 3.600 0 .4-.3.700-.7.700H.7C.3 10 0 9.700 0 9.300z" fill="#64748b"/></svg><span class="abs blur" style="left:12.8px;top:1px;width:107.4px;height:15px"></span><span class="abs" style="left:121.5px;top:0"><span style="font-size:12px;letter-spacing:-0.112px;position:relative;left:0.00px;">- 03/03 14:37</span></span></div><div class="mq" style="top:30px;left:374.4px"><span style="font-size:16px;letter-spacing:-0.900px;position:relative;left:0.00px;">-1</span></div></div>
<div class="mrow" style="top:147px;height:81px"><div class="mi" style="top:22px;left:13px"><svg class="abs" style="left:12px;top:11px" width="12" height="14" viewBox="0 0 12 14"><path d="M6 2v9.500M2 7.800l4 4L10 7.800" fill="none" stroke="#dc2626" stroke-width="2" stroke-linecap="round" stroke-linejoin="round"/></svg></div><div class="mn" style="top:13px"><span style="font-size:13.2px;letter-spacing:-0.378px;position:relative;left:0.30px;">COLLAGEN 300G - UNIVERSAL</span></div><div class="md" style="top:33px"><span style="font-size:12px;letter-spacing:-0.113px;position:relative;left:0.30px;">Venda #V2603032931 | 0 <span style="font-family:DejaVu Sans,sans-serif;font-size:0.95em;letter-spacing:0;display:inline-block;width:1.053em;text-align:center;position:relative;top:-0.5px">→</span> 0</span></div><div class="md" style="top:51px;width:250px"><svg class="abs" style="left:0;top:3px" width="9" height="10" viewBox="0 0 9 10"><circle cx="4.500" cy="2.600" r="2.500" fill="#64748b"/><path d="M0 9.300c0-2 1.600-3.600 3.600-3.600h1.800c2 0 3.600 1.600 3.600 3.600 0 .4-.3.700-.7.700H.7C.3 10 0 9.700 0 9.300z" fill="#64748b"/></svg><span class="abs blur" style="left:12.8px;top:1px;width:107.4px;height:15px"></span><span class="abs" style="left:121.5px;top:0"><span style="font-size:12px;letter-spacing:-0.112px;position:relative;left:0.00px;">- 03/03 14:37</span></span></div><div class="mq" style="top:30px;left:374.4px"><span style="font-size:16px;letter-spacing:-0.900px;position:relative;left:0.00px;">-1</span></div></div>
<div class="mrow" style="top:228px;height:101px"><div class="mi" style="top:32px;left:13px"><svg class="abs" style="left:12px;top:11px" width="12" height="14" viewBox="0 0 12 14"><path d="M6 2v9.500M2 7.800l4 4L10 7.800" fill="none" stroke="#dc2626" stroke-width="2" stroke-linecap="round" stroke-linejoin="round"/></svg></div><div class="mn" style="top:13px"><span style="font-size:13.2px;letter-spacing:-0.309px;position:relative;left:0.30px;">CREATINA MONOHYDRATE 200G ( 1 UNIDADE ) -</span><br><span style="font-size:13.2px;letter-spacing:-0.391px;position:relative;left:0.30px;">UNIVERSAL NUTRITION</span></div><div class="md" style="top:53px"><span style="font-size:12px;letter-spacing:-0.113px;position:relative;left:0.30px;">Venda #V2603032931 | 0 <span style="font-family:DejaVu Sans,sans-serif;font-size:0.95em;letter-spacing:0;display:inline-block;width:1.053em;text-align:center;position:relative;top:-0.5px">→</span> 0</span></div><div class="md" style="top:71px;width:250px"><svg class="abs" style="left:0;top:3px" width="9" height="10" viewBox="0 0 9 10"><circle cx="4.500" cy="2.600" r="2.500" fill="#64748b"/><path d="M0 9.300c0-2 1.600-3.600 3.600-3.600h1.800c2 0 3.600 1.600 3.600 3.600 0 .4-.3.700-.7.700H.7C.3 10 0 9.700 0 9.300z" fill="#64748b"/></svg><span class="abs blur" style="left:12.8px;top:1px;width:107.4px;height:15px"></span><span class="abs" style="left:121.5px;top:0"><span style="font-size:12px;letter-spacing:-0.112px;position:relative;left:0.00px;">- 03/03 14:37</span></span></div><div class="mq" style="top:40px;left:371.7px"><span style="font-size:16px;letter-spacing:0.172px;position:relative;left:0.00px;">-2</span></div></div>
<div class="mrow" style="top:329px;height:101px"><div class="mi" style="top:32px;left:13px"><svg class="abs" style="left:12px;top:11px" width="12" height="14" viewBox="0 0 12 14"><path d="M6 2v9.500M2 7.800l4 4L10 7.800" fill="none" stroke="#dc2626" stroke-width="2" stroke-linecap="round" stroke-linejoin="round"/></svg></div><div class="mn" style="top:13px"><span style="font-size:13.2px;letter-spacing:-0.451px;position:relative;left:0.30px;">XTREME GAINER 3 KG - BIO SPORT -</span><br><span style="font-size:13.2px;letter-spacing:-0.580px;position:relative;left:0.30px;">CHOCOLATE</span></div><div class="md" style="top:53px"><span style="font-size:12px;letter-spacing:-0.121px;position:relative;left:0.30px;">Venda #V2603021933 | 0 <span style="font-family:DejaVu Sans,sans-serif;font-size:0.95em;letter-spacing:0;display:inline-block;width:1.053em;text-align:center;position:relative;top:-0.5px">→</span> 0</span></div><div class="md" style="top:71px;width:250px"><svg class="abs" style="left:0;top:3px" width="9" height="10" viewBox="0 0 9 10"><circle cx="4.500" cy="2.600" r="2.500" fill="#64748b"/><path d="M0 9.300c0-2 1.600-3.600 3.600-3.600h1.800c2 0 3.600 1.600 3.600 3.600 0 .4-.3.700-.7.700H.7C.3 10 0 9.700 0 9.300z" fill="#64748b"/></svg><span class="abs blur" style="left:12.8px;top:1px;width:107.4px;height:15px"></span><span class="abs" style="left:119.6px;top:0"><span style="font-size:12px;letter-spacing:0.104px;position:relative;left:0.00px;">- 02/03 14:06</span></span></div><div class="mq" style="top:40px;left:374.4px"><span style="font-size:16px;letter-spacing:-0.900px;position:relative;left:0.00px;">-1</span></div></div>
<div class="mrow" style="top:430px;height:81px"><div class="mi" style="top:22px;left:13px"><svg class="abs" style="left:12px;top:11px" width="12" height="14" viewBox="0 0 12 14"><path d="M6 2v9.500M2 7.800l4 4L10 7.800" fill="none" stroke="#dc2626" stroke-width="2" stroke-linecap="round" stroke-linejoin="round"/></svg></div><div class="mn" style="top:13px"><span style="font-size:13.2px;letter-spacing:-0.205px;position:relative;left:0.30px;">ANIMAL WHEY 907G - ANIMAL - CHOCOLATE</span></div><div class="md" style="top:33px"><span style="font-size:12px;letter-spacing:-0.209px;position:relative;left:0.30px;">Venda #V2602281451 | 0 <span style="font-family:DejaVu Sans,sans-serif;font-size:0.95em;letter-spacing:0;display:inline-block;width:1.053em;text-align:center;position:relative;top:-0.5px">→</span> 0</span></div><div class="md" style="top:51px;width:250px"><svg class="abs" style="left:0;top:3px" width="9" height="10" viewBox="0 0 9 10"><circle cx="4.500" cy="2.600" r="2.500" fill="#64748b"/><path d="M0 9.300c0-2 1.600-3.600 3.600-3.600h1.800c2 0 3.600 1.600 3.600 3.600 0 .4-.3.700-.7.700H.7C.3 10 0 9.700 0 9.300z" fill="#64748b"/></svg><span class="abs blur" style="left:12.8px;top:1px;width:107.4px;height:15px"></span><span class="abs" style="left:119.6px;top:0"><span style="font-size:12px;letter-spacing:0.013px;position:relative;left:0.00px;">- 28/02 12:54</span></span></div><div class="mq" style="top:30px;left:374.4px"><span style="font-size:16px;letter-spacing:-0.900px;position:relative;left:0.00px;">-1</span></div></div>
<div class="mrow" style="top:511px;height:81px"><div class="mi" style="top:22px;left:13px"><svg class="abs" style="left:12px;top:11px" width="12" height="14" viewBox="0 0 12 14"><path d="M6 2v9.500M2 7.800l4 4L10 7.800" fill="none" stroke="#dc2626" stroke-width="2" stroke-linecap="round" stroke-linejoin="round"/></svg></div><div class="mn" style="top:13px"><span style="font-size:13.2px;letter-spacing:-0.402px;position:relative;left:0.30px;">EFA GOLD 60 CAPS - MAXEFFECT PHARMA</span></div><div class="md" style="top:33px"><span style="font-size:12px;letter-spacing:-0.169px;position:relative;left:0.30px;">Venda #V2602281967 | 0 <span style="font-family:DejaVu Sans,sans-serif;font-size:0.95em;letter-spacing:0;display:inline-block;width:1.053em;text-align:center;position:relative;top:-0.5px">→</span> 0</span></div><div class="mq" style="top:30px;left:374.4px"><span style="font-size:16px;letter-spacing:-0.900px;position:relative;left:0.00px;">-1</span></div></div>
</div>
<div class="abs" style="left:1864px;top:117px;width:2px;height:696px;background:#7a7a7a;box-shadow:0 0 0 1px rgba(255,255,255,.25);z-index:9"></div>
</div>
</body>
</html>
